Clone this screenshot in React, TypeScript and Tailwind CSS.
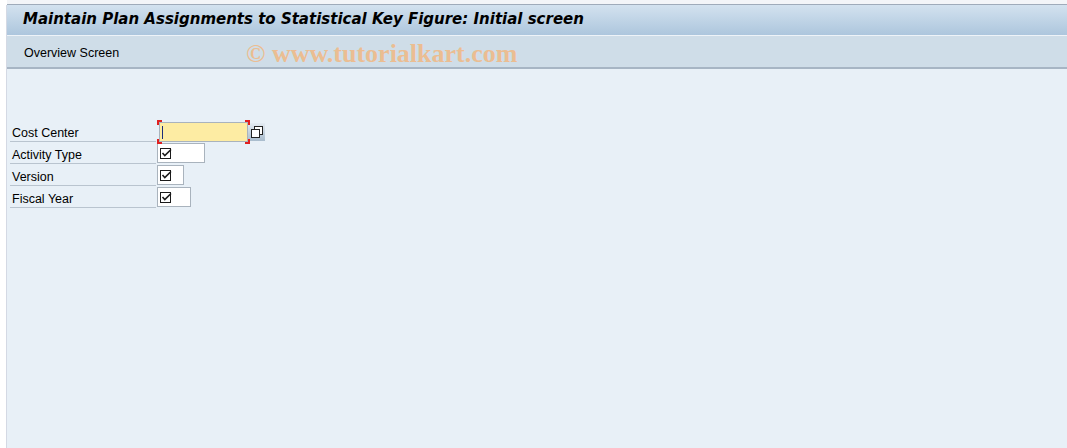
import React from "react";

function CheckIcon() {
  return (
    <svg width="12" height="11" viewBox="0 0 12 11" className="block">
      <rect x="0.5" y="0.5" width="10" height="10" fill="none" stroke="#1a1a1a" strokeWidth="1" />
      <path d="M2.5 5 L4.8 7.5 L11 1.5" fill="none" stroke="#1a1a1a" strokeWidth="1.6" />
    </svg>
  );
}

function Row({ label, children }: { label: string; children: React.ReactNode }) {
  return (
    <div className="flex h-[22px] items-end">
      <div className="w-[146px] h-[22px] border-b border-[#b9c4cf] pl-[2px] flex items-end text-[12.5px] leading-[15px] text-black">
        {label}
      </div>
      <div className="pl-[1px] pb-[1px]">{children}</div>
    </div>
  );
}

function SmallField({ w }: { w: string }) {
  return (
    <div className={`${w} h-[20px] bg-white border border-[#a9b3bd] flex items-center pl-[2px]`}>
      <CheckIcon />
    </div>
  );
}

export default function App() {
  return (
    <div
      className="w-[1067px] h-[448px] bg-white overflow-hidden flex flex-col"
      style={{ fontFamily: '"Liberation Sans", Arial, sans-serif' }}
    >
      <div className="h-[5px] bg-[#f3f5f8] ml-[7px] border-b border-[#9fabba]" />
      <div className="flex-1 flex">
        <div className="w-[7px] bg-white border-r border-[#d4d9e4]" />
        <div className="flex-1 flex flex-col bg-[#e8f0f7]">
          <div className="h-[31px] bg-gradient-to-b from-[#d3e2ef] to-[#adc6dd] border-b border-[#eef3f8] flex items-start pt-[3px] pl-[16px]">
            <span
              className="text-[15px] font-bold italic text-black"
              style={{ fontFamily: '"DejaVu Sans", Verdana, sans-serif' }}
            >
              Maintain Plan Assignments to Statistical Key Figure: Initial screen
            </span>
          </div>
          <div className="h-[33px] bg-[#cfdde8] border-b-2 border-[#a7b5c4] flex items-center pl-[17px] relative">
            <span className="text-[12.5px] text-black mt-[4px]">Overview Screen</span>
            <span
              className="absolute left-[239px] -top-[2px] text-[26px] font-bold text-[#ebbd92]"
              style={{ fontFamily: '"Liberation Serif", "Times New Roman", serif' }}
            >
              © www.tutorialkart.com
            </span>
          </div>
          <div className="pt-[51px] pl-[3px] flex flex-col">
            <div className="flex h-[22px] items-end">
              <div className="w-[146px] h-[22px] border-b border-[#b9c4cf] pl-[2px] flex items-end text-[12.5px] leading-[15px] text-black">
                Cost Center
              </div>
              <div className="flex items-end">
                <div className="relative ml-[3px] w-[89px] h-[20px] bg-[#fdeca3] border border-[#a9b3bd] flex items-center pl-[2px]">
                  <div className="w-[1px] h-[13px] bg-[#1c2e7a]" />
                  <div className="absolute -left-[3px] -top-[3px] w-[5px] h-[5px] border-l-2 border-t-2 border-[#e02020]" />
                  <div className="absolute -right-[3px] -top-[3px] w-[5px] h-[5px] border-r-2 border-t-2 border-[#e02020]" />
                  <div className="absolute -left-[3px] -bottom-[3px] w-[5px] h-[5px] border-l-2 border-b-2 border-[#e02020]" />
                  <div className="absolute -right-[3px] -bottom-[3px] w-[5px] h-[5px] border-r-2 border-b-2 border-[#e02020]" />
                </div>
                <div className="w-[17px] h-[18px] mb-[1px] bg-gradient-to-b from-[#e4ebf2] to-[#a9bccd] flex items-center justify-center">
                  <svg width="12" height="12" viewBox="0 0 12 12">
                    <rect x="3.5" y="0.5" width="8" height="8" fill="#fff" stroke="#222" />
                    <rect x="0.5" y="3.5" width="8" height="8" fill="#fff" stroke="#222" />
                  </svg>
                </div>
              </div>
            </div>
            <Row label="Activity Type">
              <SmallField w="w-[48px]" />
            </Row>
            <Row label="Version">
              <SmallField w="w-[27px]" />
            </Row>
            <Row label="Fiscal Year">
              <SmallField w="w-[34px]" />
            </Row>
          </div>
        </div>
      </div>
    </div>
  );
}
